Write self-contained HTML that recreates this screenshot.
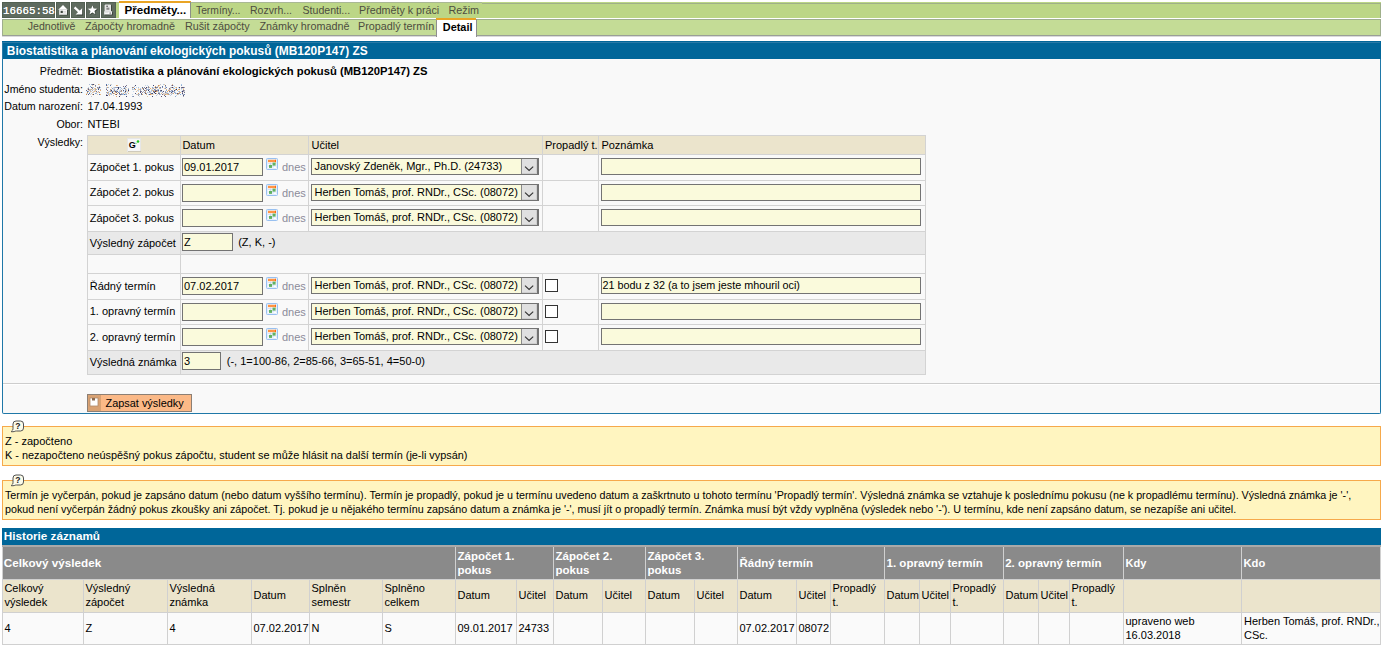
<!DOCTYPE html>
<html><head><meta charset="utf-8"><style>
html,body{margin:0;padding:0;background:#fff;width:1384px;height:649px;overflow:hidden;position:relative;}
body>div,body>svg{position:absolute;}
.t{white-space:pre;font-family:"Liberation Sans",sans-serif;}
</style></head><body>
<div style="left:2px;top:2px;width:53px;height:16px;background:#5f6b5f;box-shadow:inset 0 0 0 1px #526052;"></div>
<div style="left:56px;top:2px;width:14px;height:16px;background:#5f6b5f;box-shadow:inset 0 0 0 1px #526052;"></div>
<div style="left:71px;top:2px;width:14px;height:16px;background:#5f6b5f;box-shadow:inset 0 0 0 1px #526052;"></div>
<div style="left:86px;top:2px;width:14px;height:16px;background:#5f6b5f;box-shadow:inset 0 0 0 1px #526052;"></div>
<div style="left:101px;top:2px;width:15px;height:16px;background:#5f6b5f;box-shadow:inset 0 0 0 1px #526052;"></div>
<div class="t" style="left:3px;top:4.76px;font-size:10.8px;line-height:13px;font-weight:normal;color:#fff;font-family:'Liberation Mono',monospace;text-shadow:0 0 0.3px #fff;">16665:58</div>
<svg style="position:absolute;left:56px;top:2px" width="14" height="16" viewBox="0 0 14 16">
<g transform="translate(0.8,0.8)" fill="#2c352c" opacity="0.8"><path d="M2.2 7.7 L7 3.1 L11.8 7.7 Z"/><rect x="3.2" y="7.6" width="7.8" height="5"/></g>
<path d="M2.2 7.7 L7 3.1 L11.8 7.7 Z" fill="#fff"/><rect x="3.2" y="7.6" width="7.8" height="5" fill="#f4f4f4"/>
<rect x="4.6" y="8.8" width="2.2" height="2.2" fill="#3e463e"/><rect x="7.2" y="9.4" width="2.8" height="1" fill="#c8c8c8"/><rect x="3.2" y="11.6" width="7.8" height="1" fill="#d8d8d8"/></svg>
<svg style="position:absolute;left:71px;top:2px" width="14" height="16" viewBox="0 0 14 16">
<g transform="translate(0.8,0.8)" fill="#2c352c" stroke="#2c352c" opacity="0.8"><path d="M3.6 5.4 L9.6 11.2" stroke-width="2.3" fill="none"/><path d="M11.2 6.2 L11.2 12.6 L4.6 12.6 Z" stroke="none"/></g>
<path d="M3.6 5.4 L9.6 11.2" stroke="#fff" stroke-width="2.3" fill="none"/><path d="M11.2 6.2 L11.2 12.6 L4.6 12.6 Z" fill="#fff"/></svg>
<svg style="position:absolute;left:86px;top:2px" width="14" height="16" viewBox="0 0 14 16">
<polygon points="7.20,4.10 8.43,7.30 11.86,7.49 9.20,9.65 10.08,12.96 7.20,11.10 4.32,12.96 5.20,9.65 2.54,7.49 5.97,7.30" fill="#2c352c" opacity="0.85"/>
<polygon points="6.50,3.40 7.73,6.60 11.16,6.79 8.50,8.95 9.38,12.26 6.50,10.40 3.62,12.26 4.50,8.95 1.84,6.79 5.27,6.60" fill="#fff"/></svg>
<svg style="position:absolute;left:101px;top:2px" width="15" height="16" viewBox="0 0 15 16">
<g transform="translate(0.8,0.8)" fill="#2c352c" opacity="0.8"><rect x="3.6" y="2.4" width="6.4" height="7"/><rect x="3.2" y="9.3" width="7.8" height="3.2"/></g>
<path d="M4.4 2.4 L9.4 2.4 L10 3 L10 9.6 L3.6 9.6 L3.6 3.2 Z" fill="#e6e6e6"/>
<rect x="5.4" y="3.6" width="1.4" height="1.4" fill="#555"/><rect x="5.4" y="5.6" width="3" height="2.2" fill="#8a8a8a"/>
<rect x="3.2" y="9.3" width="7.8" height="3.2" fill="#fff"/><rect x="8.4" y="10.6" width="1.8" height="0.9" fill="#555"/><rect x="4" y="10.6" width="3.5" height="0.5" fill="#bbb"/></svg>
<div style="left:116px;top:2px;width:1265px;height:16px;background:#bcd686;"></div>
<div style="left:482px;top:3px;width:899px;height:1px;background:#9fb089;"></div>
<div style="left:116px;top:2px;width:366px;height:1px;background:#a9b894;"></div>
<div style="left:1380px;top:3px;width:1px;height:15px;background:#9fb089;"></div>
<div style="left:119px;top:1px;width:71px;height:17px;background:#fff;"></div>
<div style="left:119px;top:1px;width:72px;height:2px;background:#e9a425;"></div>
<div style="left:190px;top:2px;width:1px;height:16px;background:#8c8f88;"></div>
<div class="t" style="left:124.5px;top:2.98px;font-size:11.6px;line-height:14px;font-weight:bold;color:#000;">Předměty...</div>
<div class="t" style="left:196px;top:5.43px;font-size:10.3px;line-height:12px;font-weight:normal;color:#4d4d40;">Termíny...</div>
<div class="t" style="left:250px;top:3.86px;font-size:10.5px;line-height:13px;font-weight:normal;color:#4d4d40;">Rozvrh...</div>
<div class="t" style="left:302.5px;top:3.83px;font-size:10.6px;line-height:13px;font-weight:normal;color:#4d4d40;">Studenti...</div>
<div class="t" style="left:359px;top:3.79px;font-size:10.7px;line-height:13px;font-weight:normal;color:#4d4d40;">Předměty k práci</div>
<div class="t" style="left:448.5px;top:3.76px;font-size:10.8px;line-height:13px;font-weight:normal;color:#4d4d40;">Režim</div>
<div style="left:2px;top:19px;width:1379px;height:17px;background:#c4dc96;border-top:1px solid #9fae8e;border-bottom:1px solid #9a9f96;box-sizing:border-box;"></div>
<div style="left:2px;top:19px;width:1px;height:17px;background:#9fae8e;"></div>
<div style="left:1380px;top:19px;width:1px;height:17px;background:#9fae8e;"></div>
<div style="left:2px;top:36px;width:1379px;height:1px;background:#dadada;"></div>
<div class="t" style="left:27.7px;top:19.83px;font-size:10.6px;line-height:13px;font-weight:normal;color:#4d4d40;">Jednotlivě</div>
<div class="t" style="left:85px;top:19.76px;font-size:10.8px;line-height:13px;font-weight:normal;color:#4d4d40;">Zápočty hromadně</div>
<div class="t" style="left:184.9px;top:19.76px;font-size:10.8px;line-height:13px;font-weight:normal;color:#4d4d40;">Rušit zápočty</div>
<div class="t" style="left:259.4px;top:19.76px;font-size:10.8px;line-height:13px;font-weight:normal;color:#4d4d40;">Známky hromadně</div>
<div class="t" style="left:358px;top:19.76px;font-size:10.8px;line-height:13px;font-weight:normal;color:#4d4d40;">Propadlý termín</div>
<div style="left:436px;top:18px;width:40px;height:19px;background:#fff;"></div>
<div style="left:476px;top:19px;width:1px;height:18px;background:#8f8f8f;"></div>
<div style="left:436px;top:19px;width:1px;height:18px;background:#8f8f8f;"></div>
<div style="left:436px;top:18px;width:40px;height:2px;background:#e9a425;"></div>
<div class="t" style="left:442.8px;top:20.72px;font-size:10.9px;line-height:13px;font-weight:bold;color:#000;">Detail</div>
<div style="left:2px;top:41px;width:1379px;height:18px;background:#006699;"></div>
<div style="left:3px;top:42px;width:1377px;height:1px;background:#2a7aa6;"></div>
<div style="left:2px;top:42px;width:1px;height:17px;background:#2a7aa6;"></div>
<div style="left:2px;top:59px;width:1379px;height:355px;background:#f9f9f9;border:1px solid #1f78a8;border-top:0;box-sizing:border-box;border-radius:0 0 2px 2px;"></div>
<div class="t" style="left:6.8px;top:43.86px;font-size:11.95px;line-height:14px;font-weight:bold;color:#fff;">Biostatistika a plánování ekologických pokusů (MB120P147) ZS</div>
<div class="t" style="right:1301px;text-align:right;top:64.81px;font-size:10.65px;line-height:13px;font-weight:normal;color:#000;">Předmět:</div>
<div class="t" style="left:87.4px;top:64.10px;font-size:11.25px;line-height:14px;font-weight:bold;color:#000;">Biostatistika a plánování ekologických pokusů (MB120P147) ZS</div>
<div class="t" style="right:1301px;text-align:right;top:82.81px;font-size:10.65px;line-height:13px;font-weight:normal;color:#000;">Jméno studenta:</div>
<div class="t" style="right:1301px;text-align:right;top:99.81px;font-size:10.65px;line-height:13px;font-weight:normal;color:#000;">Datum narození:</div>
<div class="t" style="left:87.4px;top:99.69px;font-size:11px;line-height:13px;font-weight:normal;color:#000;">17.04.1993</div>
<div class="t" style="right:1301px;text-align:right;top:117.81px;font-size:10.65px;line-height:13px;font-weight:normal;color:#000;">Obor:</div>
<div class="t" style="left:87.4px;top:117.69px;font-size:11px;line-height:13px;font-weight:normal;color:#000;">NTEBI</div>
<div class="t" style="right:1301px;text-align:right;top:135.81px;font-size:10.65px;line-height:13px;font-weight:normal;color:#000;">Výsledky:</div>
<svg style="position:absolute;left:86px;top:84px" width="100" height="13" viewBox="0 0 100 13"><rect x="3" y="0" width="1" height="1" fill="#4a6ea8" opacity="0.45"/><rect x="5" y="0" width="1" height="1" fill="#4a6ea8" opacity="0.6"/><rect x="6" y="0" width="1" height="1" fill="#6c6c7c" opacity="0.95"/><rect x="7" y="0" width="1" height="1" fill="#3a3f6e" opacity="0.95"/><rect x="8" y="0" width="1" height="1" fill="#d9b080" opacity="0.45"/><rect x="12" y="0" width="1" height="1" fill="#d9b080" opacity="0.95"/><rect x="13" y="0" width="1" height="1" fill="#e0a868" opacity="0.45"/><rect x="6" y="1" width="1" height="1" fill="#d9b080" opacity="0.6"/><rect x="9" y="1" width="1" height="1" fill="#2b2d5a" opacity="0.6"/><rect x="4" y="2" width="1" height="1" fill="#7aa6d6" opacity="0.95"/><rect x="9" y="2" width="1" height="1" fill="#6c6c7c" opacity="0.6"/><rect x="13" y="2" width="1" height="1" fill="#5a4a6a" opacity="0.45"/><rect x="2" y="3" width="1" height="1" fill="#b8c8dc" opacity="0.8"/><rect x="5" y="3" width="1" height="1" fill="#3a3f6e" opacity="0.8"/><rect x="6" y="3" width="1" height="1" fill="#5a4a6a" opacity="0.45"/><rect x="7" y="3" width="1" height="1" fill="#b8c8dc" opacity="0.8"/><rect x="11" y="3" width="1" height="1" fill="#6c6c7c" opacity="0.8"/><rect x="12" y="3" width="1" height="1" fill="#a0a0b0" opacity="0.8"/><rect x="13" y="3" width="1" height="1" fill="#3a3f6e" opacity="0.95"/><rect x="14" y="3" width="1" height="1" fill="#7aa6d6" opacity="0.6"/><rect x="1" y="4" width="1" height="1" fill="#a0a0b0" opacity="0.45"/><rect x="2" y="4" width="1" height="1" fill="#6c6c7c" opacity="0.8"/><rect x="6" y="4" width="1" height="1" fill="#6c6c7c" opacity="0.8"/><rect x="8" y="4" width="1" height="1" fill="#e0a868" opacity="0.6"/><rect x="9" y="4" width="1" height="1" fill="#c98a4a" opacity="0.6"/><rect x="11" y="4" width="1" height="1" fill="#d9b080" opacity="0.6"/><rect x="12" y="4" width="1" height="1" fill="#2b2d5a" opacity="0.6"/><rect x="13" y="4" width="1" height="1" fill="#9cc4ea" opacity="0.8"/><rect x="1" y="5" width="1" height="1" fill="#d9b080" opacity="0.45"/><rect x="2" y="5" width="1" height="1" fill="#5a4a6a" opacity="0.95"/><rect x="3" y="5" width="1" height="1" fill="#6c6c7c" opacity="0.45"/><rect x="4" y="5" width="1" height="1" fill="#6c6c7c" opacity="0.45"/><rect x="5" y="5" width="1" height="1" fill="#e0a868" opacity="0.95"/><rect x="6" y="5" width="1" height="1" fill="#9cc4ea" opacity="0.45"/><rect x="7" y="5" width="1" height="1" fill="#d9b080" opacity="0.6"/><rect x="8" y="5" width="1" height="1" fill="#9cc4ea" opacity="0.45"/><rect x="9" y="5" width="1" height="1" fill="#e0a868" opacity="0.95"/><rect x="10" y="5" width="1" height="1" fill="#7aa6d6" opacity="0.8"/><rect x="12" y="5" width="1" height="1" fill="#3a3f6e" opacity="0.95"/><rect x="14" y="5" width="1" height="1" fill="#a0a0b0" opacity="0.8"/><rect x="0" y="6" width="1" height="1" fill="#3a3f6e" opacity="0.8"/><rect x="2" y="6" width="1" height="1" fill="#b8c8dc" opacity="0.6"/><rect x="3" y="6" width="1" height="1" fill="#e0a868" opacity="0.8"/><rect x="4" y="6" width="1" height="1" fill="#4a6ea8" opacity="0.45"/><rect x="6" y="6" width="1" height="1" fill="#5a4a6a" opacity="0.45"/><rect x="8" y="6" width="1" height="1" fill="#9cc4ea" opacity="0.6"/><rect x="9" y="6" width="1" height="1" fill="#e0a868" opacity="0.8"/><rect x="14" y="6" width="1" height="1" fill="#e0a868" opacity="0.95"/><rect x="1" y="7" width="1" height="1" fill="#4a6ea8" opacity="0.95"/><rect x="2" y="7" width="1" height="1" fill="#2b2d5a" opacity="0.45"/><rect x="4" y="7" width="1" height="1" fill="#e0a868" opacity="0.8"/><rect x="5" y="7" width="1" height="1" fill="#b8c8dc" opacity="0.8"/><rect x="7" y="7" width="1" height="1" fill="#e0a868" opacity="0.45"/><rect x="8" y="7" width="1" height="1" fill="#e0a868" opacity="0.8"/><rect x="9" y="7" width="1" height="1" fill="#d9b080" opacity="0.45"/><rect x="10" y="7" width="1" height="1" fill="#5a4a6a" opacity="0.8"/><rect x="12" y="7" width="1" height="1" fill="#5a4a6a" opacity="0.45"/><rect x="1" y="8" width="1" height="1" fill="#c98a4a" opacity="0.95"/><rect x="3" y="8" width="1" height="1" fill="#b8c8dc" opacity="0.95"/><rect x="4" y="8" width="1" height="1" fill="#b8c8dc" opacity="0.45"/><rect x="6" y="8" width="1" height="1" fill="#c98a4a" opacity="0.45"/><rect x="7" y="8" width="1" height="1" fill="#a0a0b0" opacity="0.6"/><rect x="10" y="8" width="1" height="1" fill="#9cc4ea" opacity="0.6"/><rect x="11" y="8" width="1" height="1" fill="#c98a4a" opacity="0.45"/><rect x="12" y="8" width="1" height="1" fill="#b8c8dc" opacity="0.45"/><rect x="13" y="8" width="1" height="1" fill="#c98a4a" opacity="0.95"/><rect x="0" y="9" width="1" height="1" fill="#e0a868" opacity="0.45"/><rect x="1" y="9" width="1" height="1" fill="#7aa6d6" opacity="0.6"/><rect x="3" y="9" width="1" height="1" fill="#4a6ea8" opacity="0.95"/><rect x="5" y="9" width="1" height="1" fill="#b8c8dc" opacity="0.8"/><rect x="9" y="9" width="1" height="1" fill="#4a6ea8" opacity="0.6"/><rect x="10" y="9" width="1" height="1" fill="#4a6ea8" opacity="0.45"/><rect x="0" y="10" width="1" height="1" fill="#c98a4a" opacity="0.95"/><rect x="2" y="10" width="1" height="1" fill="#2b2d5a" opacity="0.8"/><rect x="4" y="10" width="1" height="1" fill="#a0a0b0" opacity="0.45"/><rect x="6" y="10" width="1" height="1" fill="#e0a868" opacity="0.8"/><rect x="7" y="10" width="1" height="1" fill="#3a3f6e" opacity="0.95"/><rect x="11" y="10" width="1" height="1" fill="#d9b080" opacity="0.6"/><rect x="13" y="10" width="1" height="1" fill="#4a6ea8" opacity="0.95"/><rect x="14" y="10" width="1" height="1" fill="#e0a868" opacity="0.8"/><rect x="5" y="12" width="1" height="1" fill="#a0a0b0" opacity="0.6"/><rect x="20" y="0" width="1" height="1" fill="#4a6ea8" opacity="0.95"/><rect x="22" y="0" width="1" height="1" fill="#9cc4ea" opacity="0.8"/><rect x="24" y="0" width="1" height="1" fill="#e0a868" opacity="0.45"/><rect x="25" y="0" width="1" height="1" fill="#7aa6d6" opacity="0.45"/><rect x="20" y="1" width="1" height="1" fill="#3a3f6e" opacity="0.8"/><rect x="21" y="1" width="1" height="1" fill="#e0a868" opacity="0.45"/><rect x="24" y="1" width="1" height="1" fill="#4a6ea8" opacity="0.95"/><rect x="30" y="1" width="1" height="1" fill="#c98a4a" opacity="0.8"/><rect x="31" y="1" width="1" height="1" fill="#e0a868" opacity="0.8"/><rect x="40" y="1" width="1" height="1" fill="#2b2d5a" opacity="0.6"/><rect x="37" y="2" width="1" height="1" fill="#5a4a6a" opacity="0.8"/><rect x="39" y="2" width="1" height="1" fill="#5a4a6a" opacity="0.95"/><rect x="20" y="3" width="1" height="1" fill="#7aa6d6" opacity="0.45"/><rect x="21" y="3" width="1" height="1" fill="#c98a4a" opacity="0.8"/><rect x="22" y="3" width="1" height="1" fill="#7aa6d6" opacity="0.8"/><rect x="25" y="3" width="1" height="1" fill="#e0a868" opacity="0.45"/><rect x="27" y="3" width="1" height="1" fill="#9cc4ea" opacity="0.6"/><rect x="28" y="3" width="1" height="1" fill="#6c6c7c" opacity="0.45"/><rect x="29" y="3" width="1" height="1" fill="#4a6ea8" opacity="0.6"/><rect x="30" y="3" width="1" height="1" fill="#2b2d5a" opacity="0.45"/><rect x="31" y="3" width="1" height="1" fill="#3a3f6e" opacity="0.6"/><rect x="32" y="3" width="1" height="1" fill="#2b2d5a" opacity="0.95"/><rect x="33" y="3" width="1" height="1" fill="#7aa6d6" opacity="0.6"/><rect x="34" y="3" width="1" height="1" fill="#4a6ea8" opacity="0.6"/><rect x="38" y="3" width="1" height="1" fill="#9cc4ea" opacity="0.95"/><rect x="39" y="3" width="1" height="1" fill="#b8c8dc" opacity="0.6"/><rect x="40" y="3" width="1" height="1" fill="#b8c8dc" opacity="0.95"/><rect x="20" y="4" width="1" height="1" fill="#4a6ea8" opacity="0.45"/><rect x="26" y="4" width="1" height="1" fill="#2b2d5a" opacity="0.45"/><rect x="27" y="4" width="1" height="1" fill="#9cc4ea" opacity="0.45"/><rect x="28" y="4" width="1" height="1" fill="#a0a0b0" opacity="0.45"/><rect x="32" y="4" width="1" height="1" fill="#2b2d5a" opacity="0.95"/><rect x="35" y="4" width="1" height="1" fill="#4a6ea8" opacity="0.45"/><rect x="37" y="4" width="1" height="1" fill="#b8c8dc" opacity="0.95"/><rect x="38" y="4" width="1" height="1" fill="#3a3f6e" opacity="0.8"/><rect x="39" y="4" width="1" height="1" fill="#e0a868" opacity="0.6"/><rect x="42" y="4" width="1" height="1" fill="#6c6c7c" opacity="0.45"/><rect x="20" y="5" width="1" height="1" fill="#5a4a6a" opacity="0.8"/><rect x="24" y="5" width="1" height="1" fill="#c98a4a" opacity="0.8"/><rect x="25" y="5" width="1" height="1" fill="#b8c8dc" opacity="0.8"/><rect x="27" y="5" width="1" height="1" fill="#a0a0b0" opacity="0.45"/><rect x="28" y="5" width="1" height="1" fill="#5a4a6a" opacity="0.45"/><rect x="31" y="5" width="1" height="1" fill="#4a6ea8" opacity="0.8"/><rect x="32" y="5" width="1" height="1" fill="#a0a0b0" opacity="0.45"/><rect x="34" y="5" width="1" height="1" fill="#7aa6d6" opacity="0.45"/><rect x="36" y="5" width="1" height="1" fill="#a0a0b0" opacity="0.45"/><rect x="39" y="5" width="1" height="1" fill="#7aa6d6" opacity="0.95"/><rect x="40" y="5" width="1" height="1" fill="#e0a868" opacity="0.45"/><rect x="42" y="5" width="1" height="1" fill="#4a6ea8" opacity="0.8"/><rect x="21" y="6" width="1" height="1" fill="#5a4a6a" opacity="0.8"/><rect x="24" y="6" width="1" height="1" fill="#a0a0b0" opacity="0.95"/><rect x="25" y="6" width="1" height="1" fill="#2b2d5a" opacity="0.95"/><rect x="27" y="6" width="1" height="1" fill="#b8c8dc" opacity="0.6"/><rect x="28" y="6" width="1" height="1" fill="#6c6c7c" opacity="0.8"/><rect x="29" y="6" width="1" height="1" fill="#9cc4ea" opacity="0.45"/><rect x="30" y="6" width="1" height="1" fill="#9cc4ea" opacity="0.95"/><rect x="31" y="6" width="1" height="1" fill="#e0a868" opacity="0.45"/><rect x="33" y="6" width="1" height="1" fill="#9cc4ea" opacity="0.45"/><rect x="34" y="6" width="1" height="1" fill="#d9b080" opacity="0.45"/><rect x="35" y="6" width="1" height="1" fill="#6c6c7c" opacity="0.8"/><rect x="37" y="6" width="1" height="1" fill="#2b2d5a" opacity="0.8"/><rect x="39" y="6" width="1" height="1" fill="#7aa6d6" opacity="0.95"/><rect x="40" y="6" width="1" height="1" fill="#e0a868" opacity="0.8"/><rect x="42" y="6" width="1" height="1" fill="#2b2d5a" opacity="0.95"/><rect x="22" y="7" width="1" height="1" fill="#b8c8dc" opacity="0.45"/><rect x="23" y="7" width="1" height="1" fill="#b8c8dc" opacity="0.95"/><rect x="24" y="7" width="1" height="1" fill="#c98a4a" opacity="0.8"/><rect x="25" y="7" width="1" height="1" fill="#4a6ea8" opacity="0.6"/><rect x="26" y="7" width="1" height="1" fill="#6c6c7c" opacity="0.8"/><rect x="27" y="7" width="1" height="1" fill="#7aa6d6" opacity="0.8"/><rect x="28" y="7" width="1" height="1" fill="#e0a868" opacity="0.8"/><rect x="29" y="7" width="1" height="1" fill="#5a4a6a" opacity="0.95"/><rect x="30" y="7" width="1" height="1" fill="#5a4a6a" opacity="0.6"/><rect x="31" y="7" width="1" height="1" fill="#4a6ea8" opacity="0.95"/><rect x="33" y="7" width="1" height="1" fill="#9cc4ea" opacity="0.95"/><rect x="34" y="7" width="1" height="1" fill="#4a6ea8" opacity="0.6"/><rect x="35" y="7" width="1" height="1" fill="#c98a4a" opacity="0.8"/><rect x="37" y="7" width="1" height="1" fill="#9cc4ea" opacity="0.8"/><rect x="39" y="7" width="1" height="1" fill="#2b2d5a" opacity="0.95"/><rect x="40" y="7" width="1" height="1" fill="#b8c8dc" opacity="0.6"/><rect x="41" y="7" width="1" height="1" fill="#9cc4ea" opacity="0.45"/><rect x="42" y="7" width="1" height="1" fill="#d9b080" opacity="0.8"/><rect x="20" y="8" width="1" height="1" fill="#4a6ea8" opacity="0.6"/><rect x="21" y="8" width="1" height="1" fill="#e0a868" opacity="0.95"/><rect x="22" y="8" width="1" height="1" fill="#a0a0b0" opacity="0.95"/><rect x="26" y="8" width="1" height="1" fill="#2b2d5a" opacity="0.95"/><rect x="29" y="8" width="1" height="1" fill="#d9b080" opacity="0.95"/><rect x="30" y="8" width="1" height="1" fill="#6c6c7c" opacity="0.95"/><rect x="32" y="8" width="1" height="1" fill="#3a3f6e" opacity="0.6"/><rect x="33" y="8" width="1" height="1" fill="#4a6ea8" opacity="0.45"/><rect x="38" y="8" width="1" height="1" fill="#4a6ea8" opacity="0.45"/><rect x="39" y="8" width="1" height="1" fill="#c98a4a" opacity="0.6"/><rect x="41" y="8" width="1" height="1" fill="#b8c8dc" opacity="0.8"/><rect x="21" y="9" width="1" height="1" fill="#6c6c7c" opacity="0.45"/><rect x="22" y="9" width="1" height="1" fill="#7aa6d6" opacity="0.6"/><rect x="23" y="9" width="1" height="1" fill="#e0a868" opacity="0.45"/><rect x="24" y="9" width="1" height="1" fill="#7aa6d6" opacity="0.95"/><rect x="25" y="9" width="1" height="1" fill="#9cc4ea" opacity="0.6"/><rect x="26" y="9" width="1" height="1" fill="#e0a868" opacity="0.6"/><rect x="27" y="9" width="1" height="1" fill="#6c6c7c" opacity="0.8"/><rect x="28" y="9" width="1" height="1" fill="#e0a868" opacity="0.95"/><rect x="31" y="9" width="1" height="1" fill="#e0a868" opacity="0.95"/><rect x="33" y="9" width="1" height="1" fill="#2b2d5a" opacity="0.8"/><rect x="35" y="9" width="1" height="1" fill="#6c6c7c" opacity="0.6"/><rect x="36" y="9" width="1" height="1" fill="#7aa6d6" opacity="0.45"/><rect x="37" y="9" width="1" height="1" fill="#e0a868" opacity="0.8"/><rect x="39" y="9" width="1" height="1" fill="#a0a0b0" opacity="0.6"/><rect x="40" y="9" width="1" height="1" fill="#7aa6d6" opacity="0.45"/><rect x="42" y="9" width="1" height="1" fill="#c98a4a" opacity="0.6"/><rect x="20" y="10" width="1" height="1" fill="#5a4a6a" opacity="0.45"/><rect x="22" y="10" width="1" height="1" fill="#6c6c7c" opacity="0.45"/><rect x="23" y="10" width="1" height="1" fill="#d9b080" opacity="0.6"/><rect x="24" y="10" width="1" height="1" fill="#b8c8dc" opacity="0.45"/><rect x="25" y="10" width="1" height="1" fill="#a0a0b0" opacity="0.8"/><rect x="29" y="10" width="1" height="1" fill="#c98a4a" opacity="0.95"/><rect x="30" y="10" width="1" height="1" fill="#5a4a6a" opacity="0.95"/><rect x="33" y="10" width="1" height="1" fill="#3a3f6e" opacity="0.45"/><rect x="34" y="10" width="1" height="1" fill="#3a3f6e" opacity="0.8"/><rect x="35" y="10" width="1" height="1" fill="#3a3f6e" opacity="0.6"/><rect x="36" y="10" width="1" height="1" fill="#7aa6d6" opacity="0.95"/><rect x="37" y="10" width="1" height="1" fill="#b8c8dc" opacity="0.95"/><rect x="38" y="10" width="1" height="1" fill="#4a6ea8" opacity="0.95"/><rect x="39" y="10" width="1" height="1" fill="#9cc4ea" opacity="0.95"/><rect x="40" y="10" width="1" height="1" fill="#6c6c7c" opacity="0.6"/><rect x="20" y="11" width="1" height="1" fill="#2b2d5a" opacity="0.95"/><rect x="21" y="11" width="1" height="1" fill="#2b2d5a" opacity="0.8"/><rect x="23" y="11" width="1" height="1" fill="#d9b080" opacity="0.8"/><rect x="27" y="11" width="1" height="1" fill="#b8c8dc" opacity="0.8"/><rect x="34" y="11" width="1" height="1" fill="#e0a868" opacity="0.45"/><rect x="30" y="12" width="1" height="1" fill="#e0a868" opacity="0.95"/><rect x="33" y="12" width="1" height="1" fill="#2b2d5a" opacity="0.95"/><rect x="40" y="12" width="1" height="1" fill="#3a3f6e" opacity="0.95"/><rect x="74" y="0" width="1" height="1" fill="#a0a0b0" opacity="0.6"/><rect x="77" y="0" width="1" height="1" fill="#7aa6d6" opacity="0.6"/><rect x="78" y="0" width="1" height="1" fill="#e0a868" opacity="0.6"/><rect x="86" y="0" width="1" height="1" fill="#d9b080" opacity="0.8"/><rect x="95" y="0" width="1" height="1" fill="#9cc4ea" opacity="0.95"/><rect x="49" y="1" width="1" height="1" fill="#3a3f6e" opacity="0.95"/><rect x="59" y="1" width="1" height="1" fill="#b8c8dc" opacity="0.8"/><rect x="61" y="1" width="1" height="1" fill="#9cc4ea" opacity="0.6"/><rect x="67" y="1" width="1" height="1" fill="#3a3f6e" opacity="0.95"/><rect x="72" y="1" width="1" height="1" fill="#c98a4a" opacity="0.95"/><rect x="73" y="1" width="1" height="1" fill="#d9b080" opacity="0.8"/><rect x="79" y="1" width="1" height="1" fill="#6c6c7c" opacity="0.95"/><rect x="85" y="1" width="1" height="1" fill="#a0a0b0" opacity="0.8"/><rect x="86" y="1" width="1" height="1" fill="#5a4a6a" opacity="0.95"/><rect x="87" y="1" width="1" height="1" fill="#b8c8dc" opacity="0.6"/><rect x="95" y="1" width="1" height="1" fill="#4a6ea8" opacity="0.6"/><rect x="48" y="2" width="1" height="1" fill="#4a6ea8" opacity="0.45"/><rect x="62" y="2" width="1" height="1" fill="#a0a0b0" opacity="0.95"/><rect x="69" y="2" width="1" height="1" fill="#c98a4a" opacity="0.8"/><rect x="71" y="2" width="1" height="1" fill="#a0a0b0" opacity="0.45"/><rect x="72" y="2" width="1" height="1" fill="#c98a4a" opacity="0.45"/><rect x="76" y="2" width="1" height="1" fill="#4a6ea8" opacity="0.95"/><rect x="79" y="2" width="1" height="1" fill="#3a3f6e" opacity="0.45"/><rect x="88" y="2" width="1" height="1" fill="#9cc4ea" opacity="0.8"/><rect x="46" y="3" width="1" height="1" fill="#2b2d5a" opacity="0.6"/><rect x="47" y="3" width="1" height="1" fill="#c98a4a" opacity="0.8"/><rect x="50" y="3" width="1" height="1" fill="#7aa6d6" opacity="0.45"/><rect x="52" y="3" width="1" height="1" fill="#9cc4ea" opacity="0.95"/><rect x="56" y="3" width="1" height="1" fill="#4a6ea8" opacity="0.95"/><rect x="58" y="3" width="1" height="1" fill="#6c6c7c" opacity="0.8"/><rect x="60" y="3" width="1" height="1" fill="#3a3f6e" opacity="0.95"/><rect x="61" y="3" width="1" height="1" fill="#d9b080" opacity="0.45"/><rect x="62" y="3" width="1" height="1" fill="#4a6ea8" opacity="0.8"/><rect x="63" y="3" width="1" height="1" fill="#d9b080" opacity="0.8"/><rect x="66" y="3" width="1" height="1" fill="#7aa6d6" opacity="0.95"/><rect x="67" y="3" width="1" height="1" fill="#9cc4ea" opacity="0.45"/><rect x="68" y="3" width="1" height="1" fill="#e0a868" opacity="0.45"/><rect x="69" y="3" width="1" height="1" fill="#2b2d5a" opacity="0.8"/><rect x="70" y="3" width="1" height="1" fill="#4a6ea8" opacity="0.8"/><rect x="71" y="3" width="1" height="1" fill="#6c6c7c" opacity="0.8"/><rect x="73" y="3" width="1" height="1" fill="#d9b080" opacity="0.95"/><rect x="74" y="3" width="1" height="1" fill="#2b2d5a" opacity="0.6"/><rect x="76" y="3" width="1" height="1" fill="#3a3f6e" opacity="0.6"/><rect x="79" y="3" width="1" height="1" fill="#7aa6d6" opacity="0.45"/><rect x="80" y="3" width="1" height="1" fill="#4a6ea8" opacity="0.8"/><rect x="84" y="3" width="1" height="1" fill="#a0a0b0" opacity="0.6"/><rect x="85" y="3" width="1" height="1" fill="#2b2d5a" opacity="0.45"/><rect x="86" y="3" width="1" height="1" fill="#2b2d5a" opacity="0.95"/><rect x="87" y="3" width="1" height="1" fill="#c98a4a" opacity="0.45"/><rect x="89" y="3" width="1" height="1" fill="#d9b080" opacity="0.6"/><rect x="90" y="3" width="1" height="1" fill="#e0a868" opacity="0.95"/><rect x="92" y="3" width="1" height="1" fill="#7aa6d6" opacity="0.45"/><rect x="93" y="3" width="1" height="1" fill="#2b2d5a" opacity="0.95"/><rect x="95" y="3" width="1" height="1" fill="#6c6c7c" opacity="0.95"/><rect x="96" y="3" width="1" height="1" fill="#5a4a6a" opacity="0.95"/><rect x="97" y="3" width="1" height="1" fill="#3a3f6e" opacity="0.8"/><rect x="98" y="3" width="1" height="1" fill="#2b2d5a" opacity="0.45"/><rect x="46" y="4" width="1" height="1" fill="#b8c8dc" opacity="0.8"/><rect x="48" y="4" width="1" height="1" fill="#4a6ea8" opacity="0.95"/><rect x="52" y="4" width="1" height="1" fill="#e0a868" opacity="0.45"/><rect x="54" y="4" width="1" height="1" fill="#7aa6d6" opacity="0.6"/><rect x="56" y="4" width="1" height="1" fill="#c98a4a" opacity="0.8"/><rect x="57" y="4" width="1" height="1" fill="#6c6c7c" opacity="0.8"/><rect x="59" y="4" width="1" height="1" fill="#5a4a6a" opacity="0.95"/><rect x="60" y="4" width="1" height="1" fill="#4a6ea8" opacity="0.45"/><rect x="62" y="4" width="1" height="1" fill="#b8c8dc" opacity="0.6"/><rect x="64" y="4" width="1" height="1" fill="#e0a868" opacity="0.95"/><rect x="66" y="4" width="1" height="1" fill="#c98a4a" opacity="0.6"/><rect x="67" y="4" width="1" height="1" fill="#3a3f6e" opacity="0.45"/><rect x="69" y="4" width="1" height="1" fill="#c98a4a" opacity="0.45"/><rect x="70" y="4" width="1" height="1" fill="#c98a4a" opacity="0.45"/><rect x="73" y="4" width="1" height="1" fill="#d9b080" opacity="0.8"/><rect x="74" y="4" width="1" height="1" fill="#4a6ea8" opacity="0.45"/><rect x="78" y="4" width="1" height="1" fill="#e0a868" opacity="0.6"/><rect x="79" y="4" width="1" height="1" fill="#2b2d5a" opacity="0.45"/><rect x="83" y="4" width="1" height="1" fill="#5a4a6a" opacity="0.8"/><rect x="84" y="4" width="1" height="1" fill="#c98a4a" opacity="0.45"/><rect x="87" y="4" width="1" height="1" fill="#9cc4ea" opacity="0.95"/><rect x="88" y="4" width="1" height="1" fill="#9cc4ea" opacity="0.8"/><rect x="90" y="4" width="1" height="1" fill="#9cc4ea" opacity="0.8"/><rect x="93" y="4" width="1" height="1" fill="#7aa6d6" opacity="0.45"/><rect x="95" y="4" width="1" height="1" fill="#4a6ea8" opacity="0.45"/><rect x="96" y="4" width="1" height="1" fill="#b8c8dc" opacity="0.45"/><rect x="97" y="4" width="1" height="1" fill="#e0a868" opacity="0.45"/><rect x="46" y="5" width="1" height="1" fill="#6c6c7c" opacity="0.45"/><rect x="47" y="5" width="1" height="1" fill="#7aa6d6" opacity="0.45"/><rect x="48" y="5" width="1" height="1" fill="#a0a0b0" opacity="0.45"/><rect x="49" y="5" width="1" height="1" fill="#c98a4a" opacity="0.95"/><rect x="52" y="5" width="1" height="1" fill="#d9b080" opacity="0.6"/><rect x="53" y="5" width="1" height="1" fill="#e0a868" opacity="0.6"/><rect x="54" y="5" width="1" height="1" fill="#3a3f6e" opacity="0.45"/><rect x="55" y="5" width="1" height="1" fill="#b8c8dc" opacity="0.45"/><rect x="57" y="5" width="1" height="1" fill="#6c6c7c" opacity="0.95"/><rect x="60" y="5" width="1" height="1" fill="#5a4a6a" opacity="0.45"/><rect x="61" y="5" width="1" height="1" fill="#7aa6d6" opacity="0.8"/><rect x="62" y="5" width="1" height="1" fill="#4a6ea8" opacity="0.6"/><rect x="63" y="5" width="1" height="1" fill="#5a4a6a" opacity="0.6"/><rect x="65" y="5" width="1" height="1" fill="#d9b080" opacity="0.45"/><rect x="66" y="5" width="1" height="1" fill="#9cc4ea" opacity="0.6"/><rect x="68" y="5" width="1" height="1" fill="#4a6ea8" opacity="0.8"/><rect x="69" y="5" width="1" height="1" fill="#a0a0b0" opacity="0.8"/><rect x="71" y="5" width="1" height="1" fill="#a0a0b0" opacity="0.6"/><rect x="72" y="5" width="1" height="1" fill="#7aa6d6" opacity="0.8"/><rect x="80" y="5" width="1" height="1" fill="#e0a868" opacity="0.8"/><rect x="82" y="5" width="1" height="1" fill="#b8c8dc" opacity="0.45"/><rect x="83" y="5" width="1" height="1" fill="#5a4a6a" opacity="0.45"/><rect x="84" y="5" width="1" height="1" fill="#c98a4a" opacity="0.6"/><rect x="87" y="5" width="1" height="1" fill="#e0a868" opacity="0.45"/><rect x="89" y="5" width="1" height="1" fill="#e0a868" opacity="0.95"/><rect x="90" y="5" width="1" height="1" fill="#2b2d5a" opacity="0.95"/><rect x="92" y="5" width="1" height="1" fill="#e0a868" opacity="0.8"/><rect x="93" y="5" width="1" height="1" fill="#c98a4a" opacity="0.8"/><rect x="95" y="5" width="1" height="1" fill="#b8c8dc" opacity="0.6"/><rect x="97" y="5" width="1" height="1" fill="#d9b080" opacity="0.95"/><rect x="51" y="6" width="1" height="1" fill="#c98a4a" opacity="0.45"/><rect x="52" y="6" width="1" height="1" fill="#9cc4ea" opacity="0.8"/><rect x="54" y="6" width="1" height="1" fill="#6c6c7c" opacity="0.6"/><rect x="58" y="6" width="1" height="1" fill="#6c6c7c" opacity="0.95"/><rect x="59" y="6" width="1" height="1" fill="#d9b080" opacity="0.95"/><rect x="60" y="6" width="1" height="1" fill="#5a4a6a" opacity="0.6"/><rect x="62" y="6" width="1" height="1" fill="#2b2d5a" opacity="0.95"/><rect x="65" y="6" width="1" height="1" fill="#7aa6d6" opacity="0.6"/><rect x="66" y="6" width="1" height="1" fill="#e0a868" opacity="0.8"/><rect x="67" y="6" width="1" height="1" fill="#d9b080" opacity="0.95"/><rect x="68" y="6" width="1" height="1" fill="#b8c8dc" opacity="0.95"/><rect x="69" y="6" width="1" height="1" fill="#5a4a6a" opacity="0.8"/><rect x="70" y="6" width="1" height="1" fill="#6c6c7c" opacity="0.95"/><rect x="71" y="6" width="1" height="1" fill="#5a4a6a" opacity="0.6"/><rect x="72" y="6" width="1" height="1" fill="#3a3f6e" opacity="0.8"/><rect x="74" y="6" width="1" height="1" fill="#6c6c7c" opacity="0.95"/><rect x="75" y="6" width="1" height="1" fill="#3a3f6e" opacity="0.95"/><rect x="80" y="6" width="1" height="1" fill="#7aa6d6" opacity="0.95"/><rect x="82" y="6" width="1" height="1" fill="#e0a868" opacity="0.95"/><rect x="83" y="6" width="1" height="1" fill="#c98a4a" opacity="0.6"/><rect x="85" y="6" width="1" height="1" fill="#5a4a6a" opacity="0.6"/><rect x="86" y="6" width="1" height="1" fill="#4a6ea8" opacity="0.6"/><rect x="88" y="6" width="1" height="1" fill="#5a4a6a" opacity="0.95"/><rect x="89" y="6" width="1" height="1" fill="#7aa6d6" opacity="0.6"/><rect x="91" y="6" width="1" height="1" fill="#e0a868" opacity="0.8"/><rect x="96" y="6" width="1" height="1" fill="#b8c8dc" opacity="0.8"/><rect x="97" y="6" width="1" height="1" fill="#5a4a6a" opacity="0.8"/><rect x="98" y="6" width="1" height="1" fill="#a0a0b0" opacity="0.95"/><rect x="47" y="7" width="1" height="1" fill="#9cc4ea" opacity="0.6"/><rect x="50" y="7" width="1" height="1" fill="#d9b080" opacity="0.8"/><rect x="52" y="7" width="1" height="1" fill="#9cc4ea" opacity="0.45"/><rect x="54" y="7" width="1" height="1" fill="#3a3f6e" opacity="0.8"/><rect x="55" y="7" width="1" height="1" fill="#3a3f6e" opacity="0.6"/><rect x="57" y="7" width="1" height="1" fill="#a0a0b0" opacity="0.8"/><rect x="59" y="7" width="1" height="1" fill="#6c6c7c" opacity="0.6"/><rect x="63" y="7" width="1" height="1" fill="#4a6ea8" opacity="0.8"/><rect x="64" y="7" width="1" height="1" fill="#b8c8dc" opacity="0.6"/><rect x="65" y="7" width="1" height="1" fill="#b8c8dc" opacity="0.95"/><rect x="67" y="7" width="1" height="1" fill="#3a3f6e" opacity="0.8"/><rect x="68" y="7" width="1" height="1" fill="#c98a4a" opacity="0.95"/><rect x="69" y="7" width="1" height="1" fill="#2b2d5a" opacity="0.95"/><rect x="70" y="7" width="1" height="1" fill="#c98a4a" opacity="0.95"/><rect x="71" y="7" width="1" height="1" fill="#c98a4a" opacity="0.45"/><rect x="72" y="7" width="1" height="1" fill="#9cc4ea" opacity="0.95"/><rect x="74" y="7" width="1" height="1" fill="#7aa6d6" opacity="0.95"/><rect x="75" y="7" width="1" height="1" fill="#6c6c7c" opacity="0.45"/><rect x="76" y="7" width="1" height="1" fill="#9cc4ea" opacity="0.45"/><rect x="77" y="7" width="1" height="1" fill="#2b2d5a" opacity="0.8"/><rect x="79" y="7" width="1" height="1" fill="#a0a0b0" opacity="0.95"/><rect x="81" y="7" width="1" height="1" fill="#e0a868" opacity="0.95"/><rect x="83" y="7" width="1" height="1" fill="#5a4a6a" opacity="0.8"/><rect x="84" y="7" width="1" height="1" fill="#4a6ea8" opacity="0.6"/><rect x="85" y="7" width="1" height="1" fill="#9cc4ea" opacity="0.95"/><rect x="86" y="7" width="1" height="1" fill="#2b2d5a" opacity="0.8"/><rect x="87" y="7" width="1" height="1" fill="#a0a0b0" opacity="0.95"/><rect x="88" y="7" width="1" height="1" fill="#7aa6d6" opacity="0.8"/><rect x="92" y="7" width="1" height="1" fill="#9cc4ea" opacity="0.8"/><rect x="93" y="7" width="1" height="1" fill="#5a4a6a" opacity="0.45"/><rect x="95" y="7" width="1" height="1" fill="#b8c8dc" opacity="0.95"/><rect x="96" y="7" width="1" height="1" fill="#2b2d5a" opacity="0.95"/><rect x="97" y="7" width="1" height="1" fill="#2b2d5a" opacity="0.45"/><rect x="98" y="7" width="1" height="1" fill="#a0a0b0" opacity="0.45"/><rect x="54" y="8" width="1" height="1" fill="#5a4a6a" opacity="0.95"/><rect x="56" y="8" width="1" height="1" fill="#5a4a6a" opacity="0.6"/><rect x="58" y="8" width="1" height="1" fill="#3a3f6e" opacity="0.45"/><rect x="59" y="8" width="1" height="1" fill="#c98a4a" opacity="0.8"/><rect x="61" y="8" width="1" height="1" fill="#7aa6d6" opacity="0.6"/><rect x="62" y="8" width="1" height="1" fill="#9cc4ea" opacity="0.45"/><rect x="63" y="8" width="1" height="1" fill="#5a4a6a" opacity="0.45"/><rect x="64" y="8" width="1" height="1" fill="#4a6ea8" opacity="0.45"/><rect x="67" y="8" width="1" height="1" fill="#b8c8dc" opacity="0.95"/><rect x="68" y="8" width="1" height="1" fill="#2b2d5a" opacity="0.95"/><rect x="72" y="8" width="1" height="1" fill="#6c6c7c" opacity="0.45"/><rect x="73" y="8" width="1" height="1" fill="#a0a0b0" opacity="0.6"/><rect x="76" y="8" width="1" height="1" fill="#2b2d5a" opacity="0.45"/><rect x="79" y="8" width="1" height="1" fill="#3a3f6e" opacity="0.6"/><rect x="80" y="8" width="1" height="1" fill="#7aa6d6" opacity="0.6"/><rect x="81" y="8" width="1" height="1" fill="#b8c8dc" opacity="0.6"/><rect x="83" y="8" width="1" height="1" fill="#b8c8dc" opacity="0.6"/><rect x="85" y="8" width="1" height="1" fill="#5a4a6a" opacity="0.95"/><rect x="86" y="8" width="1" height="1" fill="#7aa6d6" opacity="0.45"/><rect x="88" y="8" width="1" height="1" fill="#2b2d5a" opacity="0.45"/><rect x="89" y="8" width="1" height="1" fill="#7aa6d6" opacity="0.6"/><rect x="93" y="8" width="1" height="1" fill="#d9b080" opacity="0.95"/><rect x="94" y="8" width="1" height="1" fill="#c98a4a" opacity="0.6"/><rect x="96" y="8" width="1" height="1" fill="#5a4a6a" opacity="0.6"/><rect x="98" y="8" width="1" height="1" fill="#6c6c7c" opacity="0.95"/><rect x="49" y="9" width="1" height="1" fill="#2b2d5a" opacity="0.8"/><rect x="52" y="9" width="1" height="1" fill="#c98a4a" opacity="0.8"/><rect x="55" y="9" width="1" height="1" fill="#6c6c7c" opacity="0.95"/><rect x="59" y="9" width="1" height="1" fill="#2b2d5a" opacity="0.8"/><rect x="60" y="9" width="1" height="1" fill="#6c6c7c" opacity="0.6"/><rect x="64" y="9" width="1" height="1" fill="#c98a4a" opacity="0.6"/><rect x="65" y="9" width="1" height="1" fill="#4a6ea8" opacity="0.95"/><rect x="66" y="9" width="1" height="1" fill="#3a3f6e" opacity="0.95"/><rect x="68" y="9" width="1" height="1" fill="#b8c8dc" opacity="0.6"/><rect x="69" y="9" width="1" height="1" fill="#2b2d5a" opacity="0.95"/><rect x="70" y="9" width="1" height="1" fill="#e0a868" opacity="0.8"/><rect x="72" y="9" width="1" height="1" fill="#6c6c7c" opacity="0.95"/><rect x="73" y="9" width="1" height="1" fill="#4a6ea8" opacity="0.8"/><rect x="75" y="9" width="1" height="1" fill="#d9b080" opacity="0.8"/><rect x="77" y="9" width="1" height="1" fill="#a0a0b0" opacity="0.6"/><rect x="78" y="9" width="1" height="1" fill="#e0a868" opacity="0.45"/><rect x="79" y="9" width="1" height="1" fill="#b8c8dc" opacity="0.8"/><rect x="80" y="9" width="1" height="1" fill="#d9b080" opacity="0.8"/><rect x="81" y="9" width="1" height="1" fill="#4a6ea8" opacity="0.6"/><rect x="82" y="9" width="1" height="1" fill="#a0a0b0" opacity="0.8"/><rect x="84" y="9" width="1" height="1" fill="#a0a0b0" opacity="0.45"/><rect x="85" y="9" width="1" height="1" fill="#d9b080" opacity="0.45"/><rect x="86" y="9" width="1" height="1" fill="#4a6ea8" opacity="0.45"/><rect x="87" y="9" width="1" height="1" fill="#e0a868" opacity="0.95"/><rect x="89" y="9" width="1" height="1" fill="#7aa6d6" opacity="0.95"/><rect x="90" y="9" width="1" height="1" fill="#a0a0b0" opacity="0.6"/><rect x="91" y="9" width="1" height="1" fill="#2b2d5a" opacity="0.8"/><rect x="92" y="9" width="1" height="1" fill="#c98a4a" opacity="0.95"/><rect x="93" y="9" width="1" height="1" fill="#2b2d5a" opacity="0.45"/><rect x="96" y="9" width="1" height="1" fill="#3a3f6e" opacity="0.95"/><rect x="46" y="10" width="1" height="1" fill="#9cc4ea" opacity="0.6"/><rect x="50" y="10" width="1" height="1" fill="#a0a0b0" opacity="0.6"/><rect x="51" y="10" width="1" height="1" fill="#e0a868" opacity="0.6"/><rect x="52" y="10" width="1" height="1" fill="#7aa6d6" opacity="0.8"/><rect x="53" y="10" width="1" height="1" fill="#4a6ea8" opacity="0.45"/><rect x="55" y="10" width="1" height="1" fill="#4a6ea8" opacity="0.95"/><rect x="56" y="10" width="1" height="1" fill="#c98a4a" opacity="0.8"/><rect x="60" y="10" width="1" height="1" fill="#d9b080" opacity="0.95"/><rect x="62" y="10" width="1" height="1" fill="#9cc4ea" opacity="0.8"/><rect x="63" y="10" width="1" height="1" fill="#3a3f6e" opacity="0.8"/><rect x="64" y="10" width="1" height="1" fill="#c98a4a" opacity="0.95"/><rect x="65" y="10" width="1" height="1" fill="#c98a4a" opacity="0.45"/><rect x="66" y="10" width="1" height="1" fill="#e0a868" opacity="0.45"/><rect x="67" y="10" width="1" height="1" fill="#e0a868" opacity="0.45"/><rect x="71" y="10" width="1" height="1" fill="#a0a0b0" opacity="0.45"/><rect x="73" y="10" width="1" height="1" fill="#2b2d5a" opacity="0.45"/><rect x="74" y="10" width="1" height="1" fill="#9cc4ea" opacity="0.8"/><rect x="76" y="10" width="1" height="1" fill="#5a4a6a" opacity="0.8"/><rect x="77" y="10" width="1" height="1" fill="#e0a868" opacity="0.45"/><rect x="78" y="10" width="1" height="1" fill="#a0a0b0" opacity="0.6"/><rect x="79" y="10" width="1" height="1" fill="#c98a4a" opacity="0.8"/><rect x="80" y="10" width="1" height="1" fill="#e0a868" opacity="0.6"/><rect x="81" y="10" width="1" height="1" fill="#d9b080" opacity="0.8"/><rect x="82" y="10" width="1" height="1" fill="#c98a4a" opacity="0.8"/><rect x="83" y="10" width="1" height="1" fill="#9cc4ea" opacity="0.95"/><rect x="85" y="10" width="1" height="1" fill="#4a6ea8" opacity="0.45"/><rect x="91" y="10" width="1" height="1" fill="#e0a868" opacity="0.8"/><rect x="92" y="10" width="1" height="1" fill="#7aa6d6" opacity="0.6"/><rect x="94" y="10" width="1" height="1" fill="#7aa6d6" opacity="0.95"/><rect x="96" y="10" width="1" height="1" fill="#b8c8dc" opacity="0.8"/><rect x="97" y="10" width="1" height="1" fill="#5a4a6a" opacity="0.45"/><rect x="98" y="10" width="1" height="1" fill="#4a6ea8" opacity="0.8"/><rect x="52" y="11" width="1" height="1" fill="#6c6c7c" opacity="0.6"/><rect x="70" y="11" width="1" height="1" fill="#b8c8dc" opacity="0.95"/><rect x="78" y="11" width="1" height="1" fill="#6c6c7c" opacity="0.95"/><rect x="84" y="11" width="1" height="1" fill="#b8c8dc" opacity="0.8"/><rect x="90" y="11" width="1" height="1" fill="#9cc4ea" opacity="0.6"/><rect x="97" y="11" width="1" height="1" fill="#3a3f6e" opacity="0.95"/><rect x="46" y="12" width="1" height="1" fill="#4a6ea8" opacity="0.6"/><rect x="47" y="12" width="1" height="1" fill="#3a3f6e" opacity="0.6"/><rect x="53" y="12" width="1" height="1" fill="#b8c8dc" opacity="0.6"/><rect x="61" y="12" width="1" height="1" fill="#c98a4a" opacity="0.45"/><rect x="66" y="12" width="1" height="1" fill="#3a3f6e" opacity="0.95"/><rect x="75" y="12" width="1" height="1" fill="#5a4a6a" opacity="0.95"/><rect x="79" y="12" width="1" height="1" fill="#2b2d5a" opacity="0.8"/><rect x="89" y="12" width="1" height="1" fill="#4a6ea8" opacity="0.6"/><rect x="97" y="12" width="1" height="1" fill="#6c6c7c" opacity="0.6"/></svg>
<div style="left:88px;top:136px;width:837px;height:18px;background:#ebe4cc;"></div>
<div style="left:88px;top:232px;width:837px;height:22px;background:#e9e9e9;"></div>
<div style="left:88px;top:351px;width:837px;height:23px;background:#e9e9e9;"></div>
<div style="left:87px;top:135px;width:839px;height:1px;background:#d3d3d3;"></div>
<div style="left:87px;top:154px;width:839px;height:1px;background:#d3d3d3;"></div>
<div style="left:87px;top:180px;width:839px;height:1px;background:#d3d3d3;"></div>
<div style="left:87px;top:205px;width:839px;height:1px;background:#d3d3d3;"></div>
<div style="left:87px;top:231px;width:839px;height:1px;background:#d3d3d3;"></div>
<div style="left:87px;top:254px;width:839px;height:1px;background:#d3d3d3;"></div>
<div style="left:87px;top:273px;width:839px;height:1px;background:#d3d3d3;"></div>
<div style="left:87px;top:299px;width:839px;height:1px;background:#d3d3d3;"></div>
<div style="left:87px;top:324px;width:839px;height:1px;background:#d3d3d3;"></div>
<div style="left:87px;top:350px;width:839px;height:1px;background:#d3d3d3;"></div>
<div style="left:87px;top:374px;width:839px;height:1px;background:#d3d3d3;"></div>
<div style="left:87px;top:135px;width:1px;height:240px;background:#d3d3d3;"></div>
<div style="left:180px;top:135px;width:1px;height:240px;background:#d3d3d3;"></div>
<div style="left:308px;top:135px;width:1px;height:20px;background:#d3d3d3;"></div>
<div style="left:308px;top:154px;width:1px;height:27px;background:#d3d3d3;"></div>
<div style="left:308px;top:180px;width:1px;height:26px;background:#d3d3d3;"></div>
<div style="left:308px;top:205px;width:1px;height:27px;background:#d3d3d3;"></div>
<div style="left:308px;top:273px;width:1px;height:27px;background:#d3d3d3;"></div>
<div style="left:308px;top:299px;width:1px;height:26px;background:#d3d3d3;"></div>
<div style="left:308px;top:324px;width:1px;height:27px;background:#d3d3d3;"></div>
<div style="left:542px;top:135px;width:1px;height:20px;background:#d3d3d3;"></div>
<div style="left:542px;top:154px;width:1px;height:27px;background:#d3d3d3;"></div>
<div style="left:542px;top:180px;width:1px;height:26px;background:#d3d3d3;"></div>
<div style="left:542px;top:205px;width:1px;height:27px;background:#d3d3d3;"></div>
<div style="left:542px;top:273px;width:1px;height:27px;background:#d3d3d3;"></div>
<div style="left:542px;top:299px;width:1px;height:26px;background:#d3d3d3;"></div>
<div style="left:542px;top:324px;width:1px;height:27px;background:#d3d3d3;"></div>
<div style="left:598px;top:135px;width:1px;height:20px;background:#d3d3d3;"></div>
<div style="left:598px;top:154px;width:1px;height:27px;background:#d3d3d3;"></div>
<div style="left:598px;top:180px;width:1px;height:26px;background:#d3d3d3;"></div>
<div style="left:598px;top:205px;width:1px;height:27px;background:#d3d3d3;"></div>
<div style="left:598px;top:273px;width:1px;height:27px;background:#d3d3d3;"></div>
<div style="left:598px;top:299px;width:1px;height:26px;background:#d3d3d3;"></div>
<div style="left:598px;top:324px;width:1px;height:27px;background:#d3d3d3;"></div>
<div style="left:925px;top:135px;width:1px;height:240px;background:#d3d3d3;"></div>
<svg style="position:absolute;left:127px;top:138px" width="14" height="14" viewBox="0 0 14 14">
<rect x="0.5" y="0.5" width="13" height="13" fill="#f6f6f6" stroke="#e6e6e6"/><rect x="1" y="13" width="13" height="1" fill="#cfcabb"/>
<text x="1.8" y="10.1" font-family="Liberation Sans" font-weight="bold" font-size="9" fill="#000">G</text>
<circle cx="11" cy="3.5" r="1.3" fill="#1ec81e"/><circle cx="9" cy="5.3" r="0.7" fill="#6ad46a"/></svg>
<div class="t" style="left:182.4px;top:138.69px;font-size:11px;line-height:13px;font-weight:normal;color:#000;">Datum</div>
<div class="t" style="left:311.5px;top:138.69px;font-size:11px;line-height:13px;font-weight:normal;color:#000;">Učitel</div>
<div class="t" style="left:545px;top:138.69px;font-size:11px;line-height:13px;font-weight:normal;color:#000;">Propadlý t.</div>
<div class="t" style="left:601.4px;top:138.69px;font-size:11px;line-height:13px;font-weight:normal;color:#000;">Poznámka</div>
<div class="t" style="left:89.7px;top:160.69px;font-size:11px;line-height:13px;font-weight:normal;color:#000;">Zápočet 1. pokus</div>
<div style="left:182px;top:158px;width:81px;height:18px;background:#fafadc;border:1px solid #737373;box-sizing:border-box;"></div>
<div class="t" style="left:184px;top:160.69px;font-size:11px;line-height:13px;font-weight:normal;color:#000;">09.01.2017</div>
<svg style="position:absolute;left:266px;top:158px" width="12" height="12" viewBox="0 0 12 12">
<rect x="0.5" y="0.5" width="11" height="11" rx="0.8" fill="#fff" stroke="#98c0f0"/>
<rect x="1.5" y="1.5" width="9" height="9" fill="#fff" stroke="#d4e4f8" stroke-width="0.6"/>
<rect x="2" y="1.8" width="8" height="2.4" fill="#ff9444"/><rect x="9" y="1.8" width="1" height="2.4" fill="#ff6a10"/>
<path d="M2 5.5 H10 M2 8 H10 M4.5 4.5 V10 M7 4.5 V10" stroke="#b8d0f0" stroke-width="0.6"/>
<rect x="3" y="6.9" width="3" height="3" fill="#62b262"/><rect x="6.6" y="4.6" width="3" height="3" fill="#62b262"/></svg>
<div class="t" style="left:282px;top:160.69px;font-size:11px;line-height:13px;font-weight:normal;color:#8b8b99;">dnes</div>
<div style="left:311px;top:158px;width:228px;height:17px;background:#fafadc;border:1px solid #737373;border-right-width:2px;box-sizing:border-box;"></div>
<div style="left:521px;top:159px;width:16px;height:15px;background:#e0e0e0;border-left:1px solid #8a8a8a;box-sizing:border-box;box-shadow:inset -1px -1px 0 #cfcfcf;"></div>
<svg style="position:absolute;left:521px;top:159px" width="16" height="15" viewBox="0 0 16 15">
<path d="M4 7.6 L8.1 11.4 L12.2 7.6" fill="none" stroke="#333" stroke-width="1.15"/></svg>
<div class="t" style="left:314.5px;top:159.69px;font-size:11px;line-height:13px;font-weight:normal;color:#000;">Janovský Zdeněk, Mgr., Ph.D. (24733)</div>
<div style="left:601px;top:158px;width:320px;height:17px;background:#fafadc;border:1px solid #737373;box-sizing:border-box;"></div>
<div class="t" style="left:89.7px;top:185.69px;font-size:11px;line-height:13px;font-weight:normal;color:#000;">Zápočet 2. pokus</div>
<div style="left:182px;top:184px;width:81px;height:18px;background:#fafadc;border:1px solid #737373;box-sizing:border-box;"></div>
<svg style="position:absolute;left:266px;top:184px" width="12" height="12" viewBox="0 0 12 12">
<rect x="0.5" y="0.5" width="11" height="11" rx="0.8" fill="#fff" stroke="#98c0f0"/>
<rect x="1.5" y="1.5" width="9" height="9" fill="#fff" stroke="#d4e4f8" stroke-width="0.6"/>
<rect x="2" y="1.8" width="8" height="2.4" fill="#ff9444"/><rect x="9" y="1.8" width="1" height="2.4" fill="#ff6a10"/>
<path d="M2 5.5 H10 M2 8 H10 M4.5 4.5 V10 M7 4.5 V10" stroke="#b8d0f0" stroke-width="0.6"/>
<rect x="3" y="6.9" width="3" height="3" fill="#62b262"/><rect x="6.6" y="4.6" width="3" height="3" fill="#62b262"/></svg>
<div class="t" style="left:282px;top:186.69px;font-size:11px;line-height:13px;font-weight:normal;color:#8b8b99;">dnes</div>
<div style="left:311px;top:184px;width:228px;height:17px;background:#fafadc;border:1px solid #737373;border-right-width:2px;box-sizing:border-box;"></div>
<div style="left:521px;top:185px;width:16px;height:15px;background:#e0e0e0;border-left:1px solid #8a8a8a;box-sizing:border-box;box-shadow:inset -1px -1px 0 #cfcfcf;"></div>
<svg style="position:absolute;left:521px;top:185px" width="16" height="15" viewBox="0 0 16 15">
<path d="M4 7.6 L8.1 11.4 L12.2 7.6" fill="none" stroke="#333" stroke-width="1.15"/></svg>
<div class="t" style="left:314.5px;top:185.69px;font-size:11px;line-height:13px;font-weight:normal;color:#000;">Herben Tomáš, prof. RNDr., CSc. (08072)</div>
<div style="left:601px;top:184px;width:320px;height:17px;background:#fafadc;border:1px solid #737373;box-sizing:border-box;"></div>
<div class="t" style="left:89.7px;top:211.69px;font-size:11px;line-height:13px;font-weight:normal;color:#000;">Zápočet 3. pokus</div>
<div style="left:182px;top:209px;width:81px;height:18px;background:#fafadc;border:1px solid #737373;box-sizing:border-box;"></div>
<svg style="position:absolute;left:266px;top:209px" width="12" height="12" viewBox="0 0 12 12">
<rect x="0.5" y="0.5" width="11" height="11" rx="0.8" fill="#fff" stroke="#98c0f0"/>
<rect x="1.5" y="1.5" width="9" height="9" fill="#fff" stroke="#d4e4f8" stroke-width="0.6"/>
<rect x="2" y="1.8" width="8" height="2.4" fill="#ff9444"/><rect x="9" y="1.8" width="1" height="2.4" fill="#ff6a10"/>
<path d="M2 5.5 H10 M2 8 H10 M4.5 4.5 V10 M7 4.5 V10" stroke="#b8d0f0" stroke-width="0.6"/>
<rect x="3" y="6.9" width="3" height="3" fill="#62b262"/><rect x="6.6" y="4.6" width="3" height="3" fill="#62b262"/></svg>
<div class="t" style="left:282px;top:211.69px;font-size:11px;line-height:13px;font-weight:normal;color:#8b8b99;">dnes</div>
<div style="left:311px;top:209px;width:228px;height:17px;background:#fafadc;border:1px solid #737373;border-right-width:2px;box-sizing:border-box;"></div>
<div style="left:521px;top:210px;width:16px;height:15px;background:#e0e0e0;border-left:1px solid #8a8a8a;box-sizing:border-box;box-shadow:inset -1px -1px 0 #cfcfcf;"></div>
<svg style="position:absolute;left:521px;top:210px" width="16" height="15" viewBox="0 0 16 15">
<path d="M4 7.6 L8.1 11.4 L12.2 7.6" fill="none" stroke="#333" stroke-width="1.15"/></svg>
<div class="t" style="left:314.5px;top:210.69px;font-size:11px;line-height:13px;font-weight:normal;color:#000;">Herben Tomáš, prof. RNDr., CSc. (08072)</div>
<div style="left:601px;top:209px;width:320px;height:17px;background:#fafadc;border:1px solid #737373;box-sizing:border-box;"></div>
<div class="t" style="left:89.7px;top:279.69px;font-size:11px;line-height:13px;font-weight:normal;color:#000;">Řádný termín</div>
<div style="left:182px;top:277px;width:81px;height:18px;background:#fafadc;border:1px solid #737373;box-sizing:border-box;"></div>
<div class="t" style="left:184px;top:279.69px;font-size:11px;line-height:13px;font-weight:normal;color:#000;">07.02.2017</div>
<svg style="position:absolute;left:266px;top:277px" width="12" height="12" viewBox="0 0 12 12">
<rect x="0.5" y="0.5" width="11" height="11" rx="0.8" fill="#fff" stroke="#98c0f0"/>
<rect x="1.5" y="1.5" width="9" height="9" fill="#fff" stroke="#d4e4f8" stroke-width="0.6"/>
<rect x="2" y="1.8" width="8" height="2.4" fill="#ff9444"/><rect x="9" y="1.8" width="1" height="2.4" fill="#ff6a10"/>
<path d="M2 5.5 H10 M2 8 H10 M4.5 4.5 V10 M7 4.5 V10" stroke="#b8d0f0" stroke-width="0.6"/>
<rect x="3" y="6.9" width="3" height="3" fill="#62b262"/><rect x="6.6" y="4.6" width="3" height="3" fill="#62b262"/></svg>
<div class="t" style="left:282px;top:279.69px;font-size:11px;line-height:13px;font-weight:normal;color:#8b8b99;">dnes</div>
<div style="left:311px;top:277px;width:228px;height:17px;background:#fafadc;border:1px solid #737373;border-right-width:2px;box-sizing:border-box;"></div>
<div style="left:521px;top:278px;width:16px;height:15px;background:#e0e0e0;border-left:1px solid #8a8a8a;box-sizing:border-box;box-shadow:inset -1px -1px 0 #cfcfcf;"></div>
<svg style="position:absolute;left:521px;top:278px" width="16" height="15" viewBox="0 0 16 15">
<path d="M4 7.6 L8.1 11.4 L12.2 7.6" fill="none" stroke="#333" stroke-width="1.15"/></svg>
<div class="t" style="left:314.5px;top:278.69px;font-size:11px;line-height:13px;font-weight:normal;color:#000;">Herben Tomáš, prof. RNDr., CSc. (08072)</div>
<div style="left:545px;top:279px;width:13px;height:13px;background:#fff;border:1px solid #333;box-sizing:border-box;"></div>
<div style="left:601px;top:277px;width:320px;height:17px;background:#fafadc;border:1px solid #737373;box-sizing:border-box;"></div>
<div class="t" style="left:602.5px;top:278.76px;font-size:10.8px;line-height:13px;font-weight:normal;color:#000;">21 bodu z 32 (a to jsem jeste mhouril oci)</div>
<div class="t" style="left:89.7px;top:304.69px;font-size:11px;line-height:13px;font-weight:normal;color:#000;">1. opravný termín</div>
<div style="left:182px;top:303px;width:81px;height:18px;background:#fafadc;border:1px solid #737373;box-sizing:border-box;"></div>
<svg style="position:absolute;left:266px;top:303px" width="12" height="12" viewBox="0 0 12 12">
<rect x="0.5" y="0.5" width="11" height="11" rx="0.8" fill="#fff" stroke="#98c0f0"/>
<rect x="1.5" y="1.5" width="9" height="9" fill="#fff" stroke="#d4e4f8" stroke-width="0.6"/>
<rect x="2" y="1.8" width="8" height="2.4" fill="#ff9444"/><rect x="9" y="1.8" width="1" height="2.4" fill="#ff6a10"/>
<path d="M2 5.5 H10 M2 8 H10 M4.5 4.5 V10 M7 4.5 V10" stroke="#b8d0f0" stroke-width="0.6"/>
<rect x="3" y="6.9" width="3" height="3" fill="#62b262"/><rect x="6.6" y="4.6" width="3" height="3" fill="#62b262"/></svg>
<div class="t" style="left:282px;top:305.69px;font-size:11px;line-height:13px;font-weight:normal;color:#8b8b99;">dnes</div>
<div style="left:311px;top:303px;width:228px;height:17px;background:#fafadc;border:1px solid #737373;border-right-width:2px;box-sizing:border-box;"></div>
<div style="left:521px;top:304px;width:16px;height:15px;background:#e0e0e0;border-left:1px solid #8a8a8a;box-sizing:border-box;box-shadow:inset -1px -1px 0 #cfcfcf;"></div>
<svg style="position:absolute;left:521px;top:304px" width="16" height="15" viewBox="0 0 16 15">
<path d="M4 7.6 L8.1 11.4 L12.2 7.6" fill="none" stroke="#333" stroke-width="1.15"/></svg>
<div class="t" style="left:314.5px;top:304.69px;font-size:11px;line-height:13px;font-weight:normal;color:#000;">Herben Tomáš, prof. RNDr., CSc. (08072)</div>
<div style="left:545px;top:305px;width:13px;height:13px;background:#fff;border:1px solid #333;box-sizing:border-box;"></div>
<div style="left:601px;top:303px;width:320px;height:17px;background:#fafadc;border:1px solid #737373;box-sizing:border-box;"></div>
<div class="t" style="left:89.7px;top:330.69px;font-size:11px;line-height:13px;font-weight:normal;color:#000;">2. opravný termín</div>
<div style="left:182px;top:328px;width:81px;height:18px;background:#fafadc;border:1px solid #737373;box-sizing:border-box;"></div>
<svg style="position:absolute;left:266px;top:328px" width="12" height="12" viewBox="0 0 12 12">
<rect x="0.5" y="0.5" width="11" height="11" rx="0.8" fill="#fff" stroke="#98c0f0"/>
<rect x="1.5" y="1.5" width="9" height="9" fill="#fff" stroke="#d4e4f8" stroke-width="0.6"/>
<rect x="2" y="1.8" width="8" height="2.4" fill="#ff9444"/><rect x="9" y="1.8" width="1" height="2.4" fill="#ff6a10"/>
<path d="M2 5.5 H10 M2 8 H10 M4.5 4.5 V10 M7 4.5 V10" stroke="#b8d0f0" stroke-width="0.6"/>
<rect x="3" y="6.9" width="3" height="3" fill="#62b262"/><rect x="6.6" y="4.6" width="3" height="3" fill="#62b262"/></svg>
<div class="t" style="left:282px;top:330.69px;font-size:11px;line-height:13px;font-weight:normal;color:#8b8b99;">dnes</div>
<div style="left:311px;top:328px;width:228px;height:17px;background:#fafadc;border:1px solid #737373;border-right-width:2px;box-sizing:border-box;"></div>
<div style="left:521px;top:329px;width:16px;height:15px;background:#e0e0e0;border-left:1px solid #8a8a8a;box-sizing:border-box;box-shadow:inset -1px -1px 0 #cfcfcf;"></div>
<svg style="position:absolute;left:521px;top:329px" width="16" height="15" viewBox="0 0 16 15">
<path d="M4 7.6 L8.1 11.4 L12.2 7.6" fill="none" stroke="#333" stroke-width="1.15"/></svg>
<div class="t" style="left:314.5px;top:329.69px;font-size:11px;line-height:13px;font-weight:normal;color:#000;">Herben Tomáš, prof. RNDr., CSc. (08072)</div>
<div style="left:545px;top:330px;width:13px;height:13px;background:#fff;border:1px solid #333;box-sizing:border-box;"></div>
<div style="left:601px;top:328px;width:320px;height:17px;background:#fafadc;border:1px solid #737373;box-sizing:border-box;"></div>
<div class="t" style="left:89.7px;top:236.69px;font-size:11px;line-height:13px;font-weight:normal;color:#000;">Výsledný zápočet</div>
<div style="left:182px;top:233px;width:51px;height:18px;background:#fafadc;border:1px solid #737373;box-sizing:border-box;"></div>
<div class="t" style="left:184px;top:235.69px;font-size:11px;line-height:13px;font-weight:normal;color:#000;">Z</div>
<div class="t" style="left:238.2px;top:235.69px;font-size:11px;line-height:13px;font-weight:normal;color:#000;">(Z, K, -)</div>
<div class="t" style="left:89.7px;top:355.69px;font-size:11px;line-height:13px;font-weight:normal;color:#000;">Výsledná známka</div>
<div style="left:182px;top:352px;width:39px;height:18px;background:#fafadc;border:1px solid #737373;box-sizing:border-box;"></div>
<div class="t" style="left:184px;top:354.69px;font-size:11px;line-height:13px;font-weight:normal;color:#000;">3</div>
<div class="t" style="left:226.8px;top:354.69px;font-size:11px;line-height:13px;font-weight:normal;color:#000;">(-, 1=100-86, 2=85-66, 3=65-51, 4=50-0)</div>
<div style="left:3px;top:383px;width:1377px;height:1px;background:#cdcdcd;"></div>
<div style="left:3px;top:384px;width:1377px;height:1px;background:#ffffff;"></div>
<div style="left:87px;top:394px;width:105px;height:18px;background:#fbb987;border:1px solid #8c7f74;box-sizing:border-box;"></div>
<div style="left:88px;top:395px;width:13px;height:16px;background:#d9a273;"></div>
<svg style="position:absolute;left:89px;top:397px" width="10" height="10" viewBox="0 0 10 10">
<rect x="1" y="1" width="8" height="8" fill="#fff" stroke="#b08a6a" stroke-width="0.8"/><rect x="3" y="1" width="3" height="2.5" fill="#8a6a50"/></svg>
<div class="t" style="left:105.6px;top:396.72px;font-size:10.9px;line-height:13px;font-weight:normal;color:#000;">Zapsat výsledky</div>
<div style="left:2px;top:426px;width:1379px;height:40px;background:#fff5c0;border:1px solid #f6a94b;box-sizing:border-box;"></div>
<svg style="position:absolute;left:10px;top:420px" width="15" height="13" viewBox="0 0 15 13">
<path d="M6 1 L10.5 1 Q13.5 1 13.5 4 L13.5 8 Q13.5 11 10.5 11 L6.5 11 Q5 11 4.2 11.6 L1.4 11.8 Q1.6 10.6 2.6 10 Q3 9.7 3 8.4 L3 4 Q3 1 6 1 Z" fill="#fbfbea" stroke="#4a4a4a" stroke-width="0.95"/>
<text x="5.3" y="9.2" font-family="Liberation Sans" font-weight="bold" font-size="8.6" fill="#1a1a1a">?</text></svg>
<div class="t" style="left:5px;top:434.69px;font-size:11px;line-height:13px;font-weight:normal;color:#000;">Z - započteno</div>
<div class="t" style="left:5px;top:448.72px;font-size:10.9px;line-height:13px;font-weight:normal;color:#000;">K - nezapočteno neúspěšný pokus zápočtu, student se může hlásit na další termín (je-li vypsán)</div>
<div style="left:2px;top:480px;width:1379px;height:40px;background:#fff5c0;border:1px solid #f6a94b;box-sizing:border-box;"></div>
<svg style="position:absolute;left:10px;top:474px" width="15" height="13" viewBox="0 0 15 13">
<path d="M6 1 L10.5 1 Q13.5 1 13.5 4 L13.5 8 Q13.5 11 10.5 11 L6.5 11 Q5 11 4.2 11.6 L1.4 11.8 Q1.6 10.6 2.6 10 Q3 9.7 3 8.4 L3 4 Q3 1 6 1 Z" fill="#fbfbea" stroke="#4a4a4a" stroke-width="0.95"/>
<text x="5.3" y="9.2" font-family="Liberation Sans" font-weight="bold" font-size="8.6" fill="#1a1a1a">?</text></svg>
<div class="t" style="left:5px;top:488.79px;font-size:10.72px;line-height:13px;font-weight:normal;color:#000;">Termín je vyčerpán, pokud je zapsáno datum (nebo datum vyššího termínu). Termín je propadlý, pokud je u termínu uvedeno datum a zaškrtnuto u tohoto termínu 'Propadlý termín'. Výsledná známka se vztahuje k poslednímu pokusu (ne k propadlému termínu). Výsledná známka je '-',</div>
<div class="t" style="left:5px;top:502.78px;font-size:10.74px;line-height:13px;font-weight:normal;color:#000;">pokud není vyčerpán žádný pokus zkoušky ani zápočet. Tj. pokud je u nějakého termínu zapsáno datum a známka je '-', musí jít o propadlý termín. Známka musí být vždy vyplněna (výsledek nebo '-'). U termínu, kde není zapsáno datum, se nezapíše ani učitel.</div>
<div style="left:2px;top:528px;width:1379px;height:17px;background:#006699;"></div>
<div class="t" style="left:3.8px;top:528.75px;font-size:11.7px;line-height:14px;font-weight:bold;color:#fff;">Historie záznamů</div>
<div style="left:2px;top:545px;width:1379px;height:100px;background:#fafafa;"></div>
<div style="left:2px;top:545px;width:1379px;height:2px;background:#a9a9a9;"></div>
<div style="left:2px;top:547px;width:1379px;height:32px;background:#8a8a8a;"></div>
<div style="left:2px;top:579px;width:1379px;height:33px;background:#ebe4cc;"></div>
<div style="left:2px;top:547px;width:1px;height:98px;background:#d0d0d0;"></div>
<div style="left:83px;top:579px;width:1px;height:66px;background:#d0d0d0;"></div>
<div style="left:167px;top:579px;width:1px;height:66px;background:#d0d0d0;"></div>
<div style="left:251px;top:579px;width:1px;height:66px;background:#d0d0d0;"></div>
<div style="left:309px;top:579px;width:1px;height:66px;background:#d0d0d0;"></div>
<div style="left:382px;top:579px;width:1px;height:66px;background:#d0d0d0;"></div>
<div style="left:455px;top:547px;width:1px;height:98px;background:#d0d0d0;"></div>
<div style="left:516px;top:579px;width:1px;height:66px;background:#d0d0d0;"></div>
<div style="left:553px;top:547px;width:1px;height:98px;background:#d0d0d0;"></div>
<div style="left:602px;top:579px;width:1px;height:66px;background:#d0d0d0;"></div>
<div style="left:645px;top:547px;width:1px;height:98px;background:#d0d0d0;"></div>
<div style="left:694px;top:579px;width:1px;height:66px;background:#d0d0d0;"></div>
<div style="left:737px;top:547px;width:1px;height:98px;background:#d0d0d0;"></div>
<div style="left:796px;top:579px;width:1px;height:66px;background:#d0d0d0;"></div>
<div style="left:830px;top:579px;width:1px;height:66px;background:#d0d0d0;"></div>
<div style="left:884px;top:547px;width:1px;height:98px;background:#d0d0d0;"></div>
<div style="left:919px;top:579px;width:1px;height:66px;background:#d0d0d0;"></div>
<div style="left:950px;top:579px;width:1px;height:66px;background:#d0d0d0;"></div>
<div style="left:1003px;top:547px;width:1px;height:98px;background:#d0d0d0;"></div>
<div style="left:1038px;top:579px;width:1px;height:66px;background:#d0d0d0;"></div>
<div style="left:1069px;top:579px;width:1px;height:66px;background:#d0d0d0;"></div>
<div style="left:1123px;top:547px;width:1px;height:98px;background:#d0d0d0;"></div>
<div style="left:1241px;top:547px;width:1px;height:98px;background:#d0d0d0;"></div>
<div style="left:1380px;top:547px;width:1px;height:98px;background:#d0d0d0;"></div>
<div style="left:2px;top:579px;width:1379px;height:1px;background:#d0d0d0;"></div>
<div style="left:2px;top:612px;width:1379px;height:1px;background:#d0d0d0;"></div>
<div style="left:2px;top:644px;width:1379px;height:1px;background:#d0d0d0;"></div>
<div class="t" style="left:3.8px;top:555.55px;font-size:11.7px;line-height:14px;font-weight:bold;color:#fff;">Celkový výsledek</div>
<div class="t" style="left:457.5px;top:549.02px;font-size:11.5px;line-height:14px;font-weight:bold;color:#fff;">Zápočet 1.</div>
<div class="t" style="left:457.5px;top:563.02px;font-size:11.5px;line-height:14px;font-weight:bold;color:#fff;">pokus</div>
<div class="t" style="left:555.5px;top:549.02px;font-size:11.5px;line-height:14px;font-weight:bold;color:#fff;">Zápočet 2.</div>
<div class="t" style="left:555.5px;top:563.02px;font-size:11.5px;line-height:14px;font-weight:bold;color:#fff;">pokus</div>
<div class="t" style="left:647.5px;top:549.02px;font-size:11.5px;line-height:14px;font-weight:bold;color:#fff;">Zápočet 3.</div>
<div class="t" style="left:647.5px;top:563.02px;font-size:11.5px;line-height:14px;font-weight:bold;color:#fff;">pokus</div>
<div class="t" style="left:739.5px;top:556.02px;font-size:11.5px;line-height:14px;font-weight:bold;color:#fff;">Řádný termín</div>
<div class="t" style="left:886.5px;top:556.00px;font-size:11.55px;line-height:14px;font-weight:bold;color:#fff;">1. opravný termín</div>
<div class="t" style="left:1005.2px;top:556.00px;font-size:11.55px;line-height:14px;font-weight:bold;color:#fff;">2. opravný termín</div>
<div class="t" style="left:1125.5px;top:556.69px;font-size:11px;line-height:13px;font-weight:bold;color:#fff;">Kdy</div>
<div class="t" style="left:1243.5px;top:556.62px;font-size:11.2px;line-height:13px;font-weight:bold;color:#fff;">Kdo</div>
<div class="t" style="left:4.4px;top:581.69px;font-size:11px;line-height:13px;font-weight:normal;color:#000;">Celkový</div>
<div class="t" style="left:4.4px;top:595.69px;font-size:11px;line-height:13px;font-weight:normal;color:#000;">výsledek</div>
<div class="t" style="left:85.5px;top:581.69px;font-size:11px;line-height:13px;font-weight:normal;color:#000;">Výsledný</div>
<div class="t" style="left:85.5px;top:595.69px;font-size:11px;line-height:13px;font-weight:normal;color:#000;">zápočet</div>
<div class="t" style="left:169.5px;top:581.69px;font-size:11px;line-height:13px;font-weight:normal;color:#000;">Výsledná</div>
<div class="t" style="left:169.5px;top:595.69px;font-size:11px;line-height:13px;font-weight:normal;color:#000;">známka</div>
<div class="t" style="left:311.5px;top:581.69px;font-size:11px;line-height:13px;font-weight:normal;color:#000;">Splněn</div>
<div class="t" style="left:311.5px;top:595.69px;font-size:11px;line-height:13px;font-weight:normal;color:#000;">semestr</div>
<div class="t" style="left:384.5px;top:581.69px;font-size:11px;line-height:13px;font-weight:normal;color:#000;">Splněno</div>
<div class="t" style="left:384.5px;top:595.69px;font-size:11px;line-height:13px;font-weight:normal;color:#000;">celkem</div>
<div class="t" style="left:832.5px;top:581.69px;font-size:11px;line-height:13px;font-weight:normal;color:#000;">Propadlý</div>
<div class="t" style="left:832.5px;top:595.69px;font-size:11px;line-height:13px;font-weight:normal;color:#000;">t.</div>
<div class="t" style="left:952.5px;top:581.69px;font-size:11px;line-height:13px;font-weight:normal;color:#000;">Propadlý</div>
<div class="t" style="left:952.5px;top:595.69px;font-size:11px;line-height:13px;font-weight:normal;color:#000;">t.</div>
<div class="t" style="left:1071.5px;top:581.69px;font-size:11px;line-height:13px;font-weight:normal;color:#000;">Propadlý</div>
<div class="t" style="left:1071.5px;top:595.69px;font-size:11px;line-height:13px;font-weight:normal;color:#000;">t.</div>
<div class="t" style="left:253.5px;top:588.69px;font-size:11px;line-height:13px;font-weight:normal;color:#000;">Datum</div>
<div class="t" style="left:457.5px;top:588.69px;font-size:11px;line-height:13px;font-weight:normal;color:#000;">Datum</div>
<div class="t" style="left:518.5px;top:588.69px;font-size:11px;line-height:13px;font-weight:normal;color:#000;">Učitel</div>
<div class="t" style="left:555.5px;top:588.69px;font-size:11px;line-height:13px;font-weight:normal;color:#000;">Datum</div>
<div class="t" style="left:604.5px;top:588.69px;font-size:11px;line-height:13px;font-weight:normal;color:#000;">Učitel</div>
<div class="t" style="left:647.5px;top:588.69px;font-size:11px;line-height:13px;font-weight:normal;color:#000;">Datum</div>
<div class="t" style="left:696.5px;top:588.69px;font-size:11px;line-height:13px;font-weight:normal;color:#000;">Učitel</div>
<div class="t" style="left:739.5px;top:588.69px;font-size:11px;line-height:13px;font-weight:normal;color:#000;">Datum</div>
<div class="t" style="left:798.5px;top:588.69px;font-size:11px;line-height:13px;font-weight:normal;color:#000;">Učitel</div>
<div class="t" style="left:886.5px;top:588.69px;font-size:11px;line-height:13px;font-weight:normal;color:#000;">Datum</div>
<div class="t" style="left:921.5px;top:588.69px;font-size:11px;line-height:13px;font-weight:normal;color:#000;">Učitel</div>
<div class="t" style="left:1005.5px;top:588.69px;font-size:11px;line-height:13px;font-weight:normal;color:#000;">Datum</div>
<div class="t" style="left:1040.5px;top:588.69px;font-size:11px;line-height:13px;font-weight:normal;color:#000;">Učitel</div>
<div class="t" style="left:4.4px;top:622.19px;font-size:11px;line-height:13px;font-weight:normal;color:#000;">4</div>
<div class="t" style="left:85.5px;top:622.19px;font-size:11px;line-height:13px;font-weight:normal;color:#000;">Z</div>
<div class="t" style="left:169.5px;top:622.19px;font-size:11px;line-height:13px;font-weight:normal;color:#000;">4</div>
<div class="t" style="left:253.5px;top:622.19px;font-size:11px;line-height:13px;font-weight:normal;color:#000;">07.02.2017</div>
<div class="t" style="left:311.5px;top:622.19px;font-size:11px;line-height:13px;font-weight:normal;color:#000;">N</div>
<div class="t" style="left:384.5px;top:622.19px;font-size:11px;line-height:13px;font-weight:normal;color:#000;">S</div>
<div class="t" style="left:457.5px;top:622.19px;font-size:11px;line-height:13px;font-weight:normal;color:#000;">09.01.2017</div>
<div class="t" style="left:518.5px;top:622.19px;font-size:11px;line-height:13px;font-weight:normal;color:#000;">24733</div>
<div class="t" style="left:739.5px;top:622.19px;font-size:11px;line-height:13px;font-weight:normal;color:#000;">07.02.2017</div>
<div class="t" style="left:798.5px;top:622.19px;font-size:11px;line-height:13px;font-weight:normal;color:#000;">08072</div>
<div class="t" style="left:1125.5px;top:614.69px;font-size:11px;line-height:13px;font-weight:normal;color:#000;">upraveno web</div>
<div class="t" style="left:1125.5px;top:628.69px;font-size:11px;line-height:13px;font-weight:normal;color:#000;">16.03.2018</div>
<div class="t" style="left:1244px;top:614.69px;font-size:11px;line-height:13px;font-weight:normal;color:#000;">Herben Tomáš, prof. RNDr.,</div>
<div class="t" style="left:1244px;top:628.69px;font-size:11px;line-height:13px;font-weight:normal;color:#000;">CSc.</div>
</body></html>
